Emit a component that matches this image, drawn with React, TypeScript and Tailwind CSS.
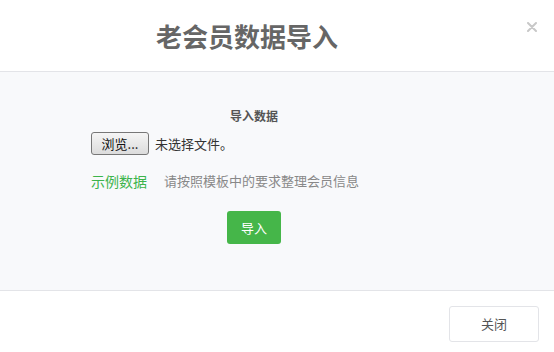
const font = "font-['Microsoft_YaHei','Noto_Sans_CJK_SC',sans-serif]";

export default function App() {
	return (
		<div className={`flex h-[352px] w-[554px] flex-col bg-white ${font}`}>
			<div className="relative flex h-[72px] shrink-0 items-center justify-center border-b border-[#e3e4e8] pr-[60px]">
				<h2 className="text-[26px] font-bold leading-none text-[#666]">老会员数据导入</h2>
				<svg className="absolute right-[17px] top-[22px]" width="10" height="10" viewBox="0 0 10 10">
					<path d="M1 1L9 9M9 1L1 9" stroke="#c8c8c8" strokeWidth="2" strokeLinecap="round" />
				</svg>
			</div>

			<div className="flex h-[218px] shrink-0 flex-col bg-[#f8f9fb] pl-[91px] pt-[35px]">
				<div className="w-[326px] text-center text-[12px] font-bold leading-[18px] text-[#555]">导入数据</div>
				<div className="mt-[7px] flex items-center gap-[6px]">
					<button className="h-[23px] w-[58px] rounded-[3px] border border-[#777] bg-gradient-to-b from-[#f5f5f5] to-[#dcdcdc] text-[13px] leading-none text-[#111]">
						浏览...
					</button>
					<span className="text-[13px] text-[#333]">未选择文件。</span>
				</div>
				<div className="mt-[16px] flex items-center gap-[17px] leading-[20px]">
					<span className="text-[14px] text-[#3cb44b]">示例数据</span>
					<span className="text-[13px] text-[#888]">请按照模板中的要求整理会员信息</span>
				</div>
				<div className="mt-[20px] flex w-[326px] justify-center">
					<button className="h-[33px] w-[54px] rounded-[3px] bg-[#45b649] text-[13px] text-white">导入</button>
				</div>
			</div>

			<div className="flex flex-1 items-start justify-end border-t border-[#e3e4e8] pr-[15px] pt-[15px]">
				<button className="h-[36px] w-[90px] rounded-[3px] border border-[#e3e4e8] bg-white text-[13px] text-[#555]">关闭</button>
			</div>
		</div>
	);
}
